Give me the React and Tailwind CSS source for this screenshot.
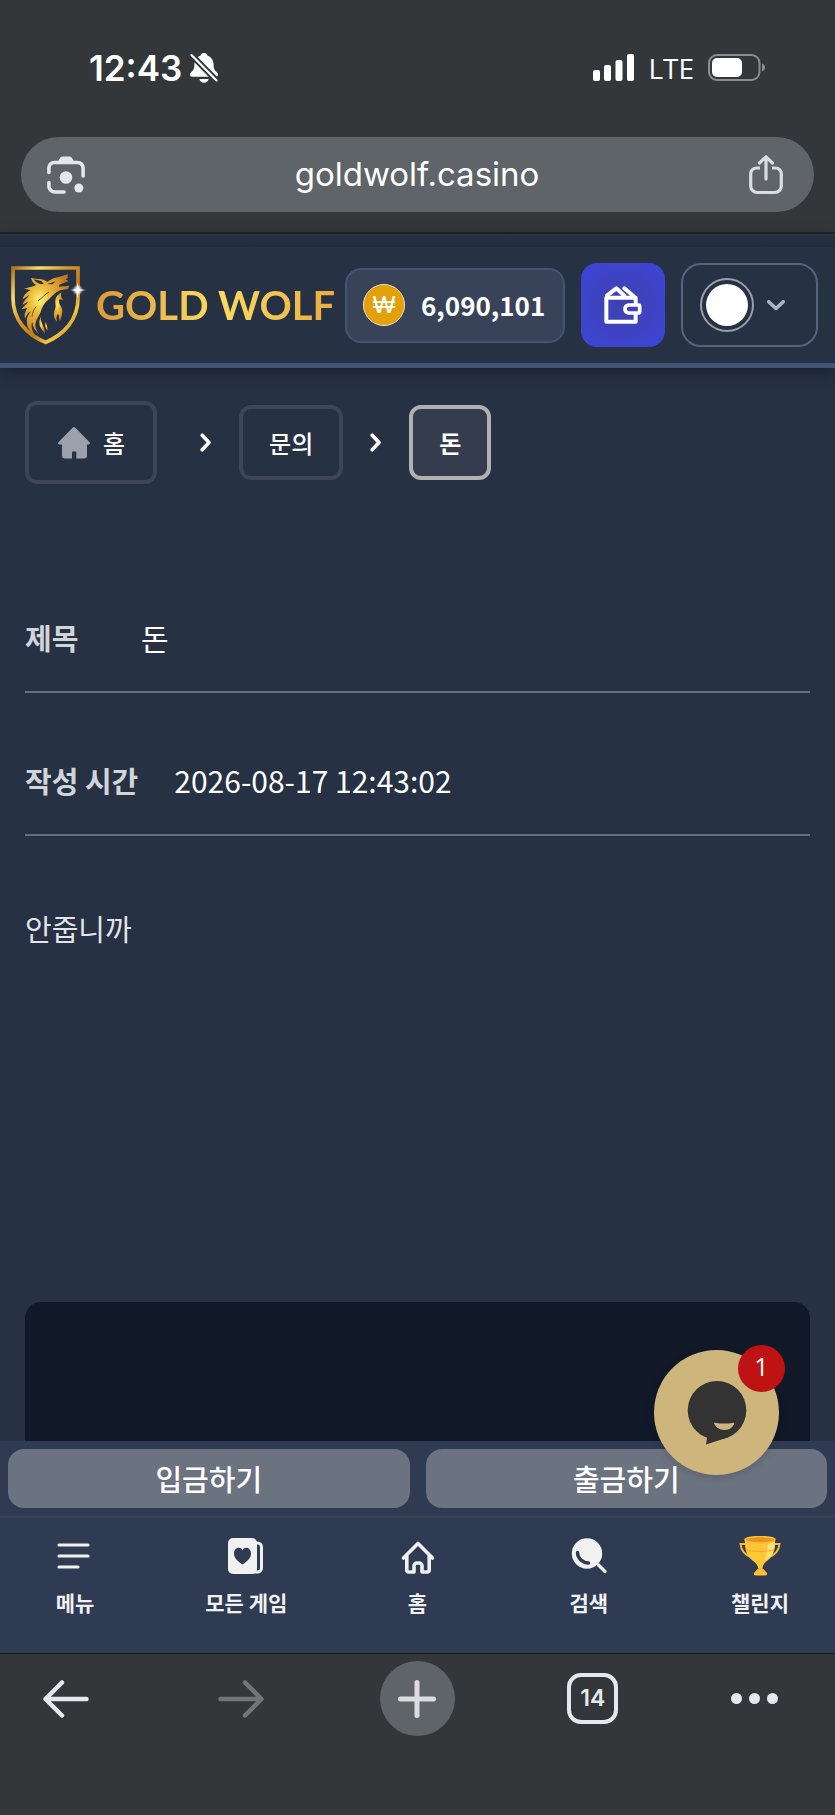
import React from 'react';

const BellOffIcon = () => (
  <svg viewBox="0 0 28 30" className="h-[30px] w-7" aria-label="Silent mode">
    <path d="M14 0c-2 0-3.3 1.200-3.600 2.700C6.500 4 4.600 7.300 4.400 11.500 4.300 16 3.500 17 1.200 19.300.3 20.300 0 21 0 21.800 0 23 .9 23.800 2.200 23.800h23.600c1.300 0 2.200-.8 2.200-2 0-.8-.3-1.500-1.200-2.500-2.300-2.300-3.100-3.300-3.200-7.800-.2-4.200-2.100-7.500-6-8.800C17.300 1.200 16 0 14 0ZM9.300 26h9.400c-.6 2.200-2.300 3.700-4.700 3.700S9.900 28.200 9.300 26Z" fill="#fff" />
    <path d="M1.500 2 27 28" stroke="#333739" strokeWidth="6" />
    <path d="M1.500 2 26.500 27.500" stroke="#fff" strokeWidth="2.200" strokeLinecap="round" />
  </svg>
);

const SignalIcon = () => (
  <svg viewBox="0 0 41 27" className="h-[27px] w-[41px]" fill="#fff" aria-label="Signal">
    <rect x="0" y="16" width="7" height="11" rx="2" />
    <rect x="11" y="11" width="7" height="16" rx="2" />
    <rect x="22.500" y="6" width="7" height="21" rx="2" />
    <rect x="34" y="0" width="7" height="27" rx="2" />
  </svg>
);

const BatteryIcon = () => (
  <svg viewBox="0 0 58 27" className="h-[27px] w-[58px]" aria-label="Battery">
    <rect x="1" y="1" width="50.500" height="25" rx="8" fill="none" stroke="#8b8d8f" strokeWidth="2" />
    <rect x="4" y="4" width="30" height="19" rx="5" fill="#fff" />
    <path d="M54 9.500c2 .7 3 2.200 3 4s-1 3.300-3 4Z" fill="#8b8d8f" />
  </svg>
);

const LensIcon = () => (
  <svg viewBox="0 0 38 38" className="size-[38px]" fill="none" stroke="#e3e7eb" strokeWidth="3.600" strokeLinecap="round">
    <path d="M1.900 16.500V12a5.500 5.500 0 0 1 5.500-5.500h23.200a5.500 5.500 0 0 1 5.500 5.500v8M1.900 26.500V30a6 6 0 0 0 6 6H17" />
    <path d="M11 5.500 13 2q.7-1.500 2.500-1.500h7q1.800 0 2.500 1.500l2 3.500Z" fill="#e3e7eb" stroke="none" />
    <circle cx="19" cy="21.500" r="6.300" fill="#e3e7eb" stroke="none" />
    <circle cx="31.800" cy="32" r="4.500" fill="#e3e7eb" stroke="none" />
  </svg>
);

const ShareIcon = () => (
  <svg viewBox="0 0 34 40" className="h-10 w-[34px]" fill="none" stroke="#dadce0" strokeWidth="3.200" strokeLinecap="round" strokeLinejoin="round">
    <path d="M11 13H7.500A5.800 5.800 0 0 0 1.700 18.800V31A6.500 6.500 0 0 0 8.200 37.500h17.600A6.500 6.500 0 0 0 32.300 31V18.800A5.800 5.800 0 0 0 26.500 13H23" strokeLinecap="butt" />
    <path d="M17 24V2.500M10.500 8 17 1.800 23.500 8" />
  </svg>
);

const WolfShield = () => (
  <svg viewBox="33 30 225 237" className="h-[79px] w-[75px] shrink-0" aria-hidden="true">
    <defs>
      <linearGradient id="shieldGold" x1="0" y1="0" x2="1" y2="1">
        <stop offset="0" stopColor="#b8701a" />
        <stop offset=".2" stopColor="#f6dc6a" />
        <stop offset=".42" stopColor="#d9952a" />
        <stop offset=".62" stopColor="#c07a1c" />
        <stop offset=".76" stopColor="#f3c840" />
        <stop offset="1" stopColor="#a9681a" />
      </linearGradient>
      <radialGradient id="furGold" cx=".38" cy=".42" r=".6">
        <stop offset="0" stopColor="#fff27a" />
        <stop offset=".35" stopColor="#edbd3c" />
        <stop offset=".75" stopColor="#d9982c" />
        <stop offset="1" stopColor="#c17a22" />
      </radialGradient>
      <radialGradient id="spark">
        <stop offset="0" stopColor="#fff" />
        <stop offset=".4" stopColor="#fff" stopOpacity=".8" />
        <stop offset="1" stopColor="#fff" stopOpacity="0" />
      </radialGradient>
    </defs>
    <path d="M39 36H234V125C234 192 192 236 137 259C80 236 39 192 39 125Z" fill="none" stroke="url(#shieldGold)" strokeWidth="11" />
    <g fill="url(#furGold)">
      {/* head, snout and mane */}
      <path d="M93 65C105 70 116 67 130 71L142 77C152 72 162 64 174 64L203 55L203 66L197 70L205 76L192 80L178 86L177 92L208 89L204 99L180 103C164 110 156 122 144 132C132 142 126 154 122 168C116 182 108 190 106 206C106 218 112 226 117 234C104 224 98 212 97 198C92 208 95 220 104 236C88 226 80 212 81 198C79 186 86 176 92 166C82 172 78 180 76 188C71 178 76 166 82 156L65 160C70 151 80 146 85 136L68 146C72 132 82 126 89 116L68 130C72 114 82 108 92 102L72 98C86 94 98 93 108 87C99 81 95 74 93 65Z" />
      {/* chest tufts */}
      <path d="M186 108C180 118 184 126 190 132L178 130C174 144 186 152 187 162C189 174 182 184 180 198C177 188 178 180 174 173C168 180 169 188 171 197C158 184 161 171 165 159C169 147 164 142 166 131C168 121 176 113 186 108Z" />
      <path d="M123 182C119 200 137 212 134 233C129 222 118 216 118 202C117 194 119 188 123 182Z" />
      <path d="M138 197C138 206 145 213 143 224C137 216 132 208 138 197Z" />
    </g>
    <path d="M101 70L124 75L132 84C118 86 108 80 101 70ZM142 84L167 76L157 85Z" fill="#263143" />
    <path d="M147 108C134 114 128 126 114 134M108 152C102 160 97 170 96 182" stroke="#6b5222" strokeWidth="3" fill="none" />
    <circle cx="233" cy="102" r="17" fill="url(#spark)" />
    <path d="M233 78 236 99 258 102 236 105 233 128 230 105 210 102 230 99Z" fill="#fff" />
  </svg>
);

const WalletIcon = () => (
  <svg viewBox="43 79 114 114" className="size-[38px]" fill="none" stroke="#fff" strokeWidth="12" strokeLinecap="round" strokeLinejoin="round">
    <path d="M138 133V114H50V186H138V164" />
    <path d="M52 108 80 86 104 108M104 86 132 110" />
    <path d="M116 136H147Q150 136 150 139V157Q150 160 147 160H116Q106 158 106 148T116 136Z" strokeWidth="11" />
  </svg>
);

const ChevronIcon = ({ className }) => (
  <svg viewBox="0 0 12 19" className={className} fill="none" stroke="currentColor" strokeWidth="3.600" strokeLinecap="round" strokeLinejoin="round">
    <path d="M2.200 2.200 9 9.500 2.200 16.800" />
  </svg>
);

const HomeSolidIcon = () => (
  <svg viewBox="0 0 32 32" className="size-8" fill="#9ca1ad">
    <path d="M14.600.7a2 2 0 0 1 2.800 0L31.300 15c1.300 1.400.6 2.500-.9 2.500H29V28.500A3 3 0 0 1 26 31.500H18.300V25.500a1 1 0 0 0-1-1H15a1 1 0 0 0-1 1V31.500H7A3 3 0 0 1 4 28.500V17.500H1.600C.1 17.500-.6 16.400.7 15Z" />
  </svg>
);

const MenuIcon = () => (
  <svg viewBox="0 0 36 36" className="size-9" stroke="#f1f1f1" strokeWidth="3.200" strokeLinecap="round">
    <path d="M2 7H31M2 18H31M2 29H21" />
  </svg>
);

const CardsIcon = () => (
  <svg viewBox="0 0 36 36" className="size-9">
    <path d="M27 5h2.500a4 4 0 0 1 4 4v21a4 4 0 0 1-4 4H22" fill="none" stroke="#f1f1f1" strokeWidth="3" />
    <rect x="0" y="0" width="29" height="36" rx="5" fill="#f1f1f1" />
    <path d="M14.500 26.500C9 23 6 19.500 6 15.500c0-6 6.500-7.500 8.500-3.500 2-4 8.500-2.500 8.500 3.500 0 4-3 7.500-8.500 11Z" fill="#2e3b52" />
  </svg>
);

const HomeIcon = () => (
  <svg viewBox="0 0 36 36" className="size-9" fill="none" stroke="#f1f1f1" strokeWidth="3.600" strokeLinecap="round" strokeLinejoin="round">
    <path d="M3.500 20 18 5.500 32.500 20M6.800 17.500V32a2 2 0 0 0 2 2H14V28a3 3 0 0 1 3-3h2a3 3 0 0 1 3 3V34h5.200a2 2 0 0 0 2-2V17.500" />
  </svg>
);

const SearchIcon = () => (
  <svg viewBox="0 0 36 36" className="size-9" fill="none" strokeLinecap="round">
    <circle cx="16" cy="15.500" r="15.200" fill="#f1f1f1" />
    <path d="M6.500 14.500C6.500 20 11.500 25 17.500 25" stroke="#2e3b52" strokeWidth="3.400" />
    <path d="M27.500 27 34 33.500" stroke="#f1f1f1" strokeWidth="3.200" />
  </svg>
);

const TrophyIcon = () => (
  <svg viewBox="0 0 42 40" className="h-10 w-[42px]">
    <path d="M7 8H1.500C2 14 6 19.500 12 21M35 8H40.500C40 14 36 19.500 30 21" fill="none" stroke="#f2b836" strokeWidth="2" />
    <path d="M6 3H36C36.500 12 35 20 28.500 24.500 24 27.500 23.500 31 23.500 34H19.500C19.500 31 18 27.500 13.500 24.500 7 20 5.500 12 6 3Z" fill="#ffc636" />
    <path d="M29 6H36C36 12 35 18 29 23L26 24Q29 15 29 6Z" fill="#ffe073" />
    <ellipse cx="21" cy="3.800" rx="15" ry="3.200" fill="#e8961f" stroke="#ffbd35" strokeWidth="1.500" />
    <path d="M7 14Q21 17 35 14" stroke="#f5ad2a" strokeWidth="1.200" fill="none" />
    <path d="M18.500 33H24.500L28 37Q29 39.500 26 39.500H17Q14 39.500 15 37Z" fill="#ffbd35" />
  </svg>
);

const ChatBubbleIcon = () => (
  <svg viewBox="0 0 60 64" className="h-16 w-[60px]" aria-hidden="true">
    <circle cx="30" cy="29.300" r="29.300" fill="#333" />
    <path d="M20 54V57L19 63.500 42 56 44 50Z" fill="#333" />
    <path d="M27 42.500Q26.500 41.500 28 41.700 37.500 43.500 46 41.700 48 41.500 47 43.500 44 49 37 49T27 42.500Z" fill="#cdb57c" />
  </svg>
);

const BackIcon = () => (
  <svg viewBox="0 0 46 38" className="h-[38px] w-[46px]" fill="none" stroke="currentColor" strokeWidth="4.500" strokeLinecap="round" strokeLinejoin="round">
    <path d="M43.500 19H3M19 2.500 2.500 19 19 35.500" />
  </svg>
);

const ForwardIcon = () => (
  <svg viewBox="0 0 46 38" className="h-[38px] w-[46px]" fill="none" stroke="currentColor" strokeWidth="4.500" strokeLinecap="round" strokeLinejoin="round">
    <path d="M2.500 19H43M27 2.500 43.500 19 27 35.500" />
  </svg>
);

const navItems = [
  { label: '메뉴', Icon: MenuIcon },
  { label: '모든 게임', Icon: CardsIcon },
  { label: '홈', Icon: HomeIcon },
  { label: '검색', Icon: SearchIcon },
  { label: '챌린지', Icon: TrophyIcon },
];

function BrowserTop() {
  return (
    <div className="border-b-2 border-[#1f2428] bg-[#333739] px-[21px] pb-5 font-['Inter',sans-serif] text-white">
      <div className="flex h-[137px] items-center justify-between pb-[2px] pl-[68px] pr-12">
        <div className="flex items-center gap-2">
          <span className="text-[35px] font-semibold leading-10">12:43</span>
          <BellOffIcon />
        </div>
        <div className="flex items-center gap-[14px]">
          <SignalIcon />
          <span className="font-['Open_Sans',sans-serif] text-[28px] font-medium leading-8">LTE</span>
          <BatteryIcon />
        </div>
      </div>
      <div className="flex h-[75px] items-center justify-between rounded-full bg-[#5f6468] pl-[26px] pr-[31px]">
        <button type="button" aria-label="Search with camera"><LensIcon /></button>
        <span className="pb-[2px] text-[33px] leading-10">goldwolf.casino</span>
        <button type="button" aria-label="Share"><ShareIcon /></button>
      </div>
    </div>
  );
}

function Header() {
  return (
    <header className="relative border-b-[5px] border-[#415473] bg-[#263143] shadow-[0_4px_14px_rgba(0,0,0,0.35)]">
      <div className="h-[13px] bg-linear-to-b from-[#273246] to-[#222c3c]" />
      <div className="flex h-[116px] items-center gap-4 pl-[11px] pr-[17px]">
        <a href="#home" className="-mr-2 flex min-w-0 flex-1 items-center gap-[10px]">
          <WolfShield />
          <span className="whitespace-nowrap bg-linear-to-r from-[#dc9c35] via-[#fbdc62] to-[#e9ad40] bg-clip-text font-['Lato',sans-serif] text-[40px] font-bold leading-[48px] text-transparent">
            GOLD WOLF
          </span>
        </a>
        <div className="flex h-[75px] w-[220px] shrink-0 items-center gap-4 rounded-2xl border-2 border-[#415577] bg-[#384359] pl-4">
          <span className="flex size-[42px] items-center justify-center rounded-full border border-[#f3e3bd] bg-[#e2a00b] font-['Liberation_Sans',sans-serif] text-2xl leading-none text-white">
            ₩
          </span>
          <span className="text-[26px] font-bold leading-8">6,090,101</span>
        </div>
        <button
          type="button"
          aria-label="Wallet"
          className="flex size-[84px] shrink-0 items-center justify-center rounded-2xl bg-radial from-[#3f41ac] to-[#3d44da]"
        >
          <WalletIcon />
        </button>
        <button
          type="button"
          aria-label="Profile"
          className="flex h-[84px] w-[137px] shrink-0 items-center gap-4 rounded-[20px] border-2 border-[#56637d] pl-[17px]"
        >
          <span className="flex size-[54px] items-center justify-center rounded-full border-2 border-[#9a9fa9]">
            <span className="size-[42px] rounded-full bg-white" />
          </span>
          <ChevronIcon className="h-[19px] w-3 rotate-90 text-[#a9b4c6]" />
        </button>
      </div>
    </header>
  );
}

function Breadcrumbs() {
  return (
    <nav aria-label="Breadcrumb" className="flex items-center text-2xl font-medium">
      <a href="#home" className="mr-4 flex h-[83px] items-center gap-[13px] rounded-xl border-4 border-[#3c4655] pl-[29px] pr-7">
        <HomeSolidIcon />
        <span>홈</span>
      </a>
      <span className="flex w-[66px] justify-center"><ChevronIcon className="h-[19px] w-3" /></span>
      <a href="#inquiry" className="flex h-[75px] items-center rounded-xl border-4 border-[#3c4655] px-[26px]">문의</a>
      <span className="flex w-[66px] justify-center"><ChevronIcon className="h-[19px] w-3" /></span>
      <span aria-current="page" className="flex h-[75px] items-center rounded-xl border-4 border-[#b1b1b1] bg-[#343c4d] px-[26px] font-bold">돈</span>
    </nav>
  );
}

function DetailRow({ label, value }) {
  return (
    <div className="flex h-[143px] items-center gap-9 border-b-2 border-[#676e7e] pt-8">
      <dt className="min-w-20 text-[29px] font-bold leading-10 text-[#d1d5db]">{label}</dt>
      <dd className="text-[30px] leading-10">{value}</dd>
    </div>
  );
}

function BottomNav() {
  return (
    <div className="relative bg-[#2e3b52]">
      <div className="grid grid-cols-2 gap-4 p-2 text-[29px] font-medium leading-10">
        <button type="button" className="h-[59px] rounded-2xl bg-[#6b7280] pb-[2px]">입금하기</button>
        <button type="button" className="h-[59px] rounded-2xl bg-[#6b7280] pb-[2px]">출금하기</button>
      </div>
      <nav className="flex h-[137px] justify-between border-t-2 border-[#3a4253] px-[11px] pt-[18px]">
        {navItems.map(({ label, Icon }) => (
          <a key={label} href="#nav" className="flex w-32 flex-col items-center gap-[10px] text-[21px] font-bold leading-8 text-[#f1f1f1]">
            <span className="flex h-10 items-center"><Icon /></span>
            <span>{label}</span>
          </a>
        ))}
      </nav>

      {/* chat widget floats over the action buttons */}
      <button
        type="button"
        aria-label="Open chat"
        className="absolute -top-[91px] right-14 flex size-[125px] items-center justify-center rounded-full bg-[#cdb57c] shadow-[0_2px_8px_rgba(0,0,0,0.15)]"
      >
        <ChatBubbleIcon />
        <span className="absolute -right-[6px] -top-[5px] flex size-[47px] items-center justify-center rounded-full bg-[#bf1212] pb-1 font-['Open_Sans',sans-serif] text-[25px] leading-none text-white">
          1
        </span>
      </button>
    </div>
  );
}

function BrowserBottom() {
  return (
    <div className="flex h-[162px] items-start justify-between border-t border-[#14181c] bg-[#333739] pl-7 pr-[57px] pt-[7px] text-[#e5e9ed]">
      <button type="button" aria-label="Back" className="flex size-[75px] items-center justify-center"><BackIcon /></button>
      <button type="button" aria-label="Forward" disabled className="flex size-[75px] items-center justify-center text-[#757575]"><ForwardIcon /></button>
      <button type="button" aria-label="New tab" className="flex size-[75px] items-center justify-center rounded-full bg-[#5f6468]">
        <svg viewBox="0 0 38 38" className="size-[38px]" stroke="#dadce0" strokeWidth="5" strokeLinecap="round">
          <path d="M19 2.500V35.500M2.500 19H35.500" />
        </svg>
      </button>
      <button type="button" aria-label="Tabs" className="flex size-[75px] items-center justify-center">
        <span className="flex size-[51px] items-center justify-center rounded-[14px] border-4 border-[#e5e9ed] font-['Inter',sans-serif] text-[23px] font-semibold">14</span>
      </button>
      <button type="button" aria-label="More" className="flex h-[75px] w-[47px] items-center justify-between">
        <span className="size-[11px] rounded-full bg-[#e5e9ed]" />
        <span className="size-[11px] rounded-full bg-[#e5e9ed]" />
        <span className="size-[11px] rounded-full bg-[#e5e9ed]" />
      </button>
    </div>
  );
}

function App() {
  return (
    <div className="flex min-h-screen flex-col bg-[#263143] font-['Noto_Sans_CJK_KR',sans-serif] text-white">
      <BrowserTop />
      <Header />
      <main className="flex flex-1 flex-col px-[25px] pt-[33px]">
        <Breadcrumbs />
        <dl className="mt-[66px]">
          <DetailRow label="제목" value="돈" />
          <DetailRow label="작성 시간" value="2026-08-17 12:43:02" />
        </dl>
        <p className="mt-[72px] text-[29px] leading-10 text-[#e2e5ea]">안줍니까</p>
        <section className="mt-[354px] min-h-[139px] flex-1 rounded-t-2xl bg-[#111827]" />
      </main>
      <BottomNav />
      <BrowserBottom />
    </div>
  );
}

export default App;
